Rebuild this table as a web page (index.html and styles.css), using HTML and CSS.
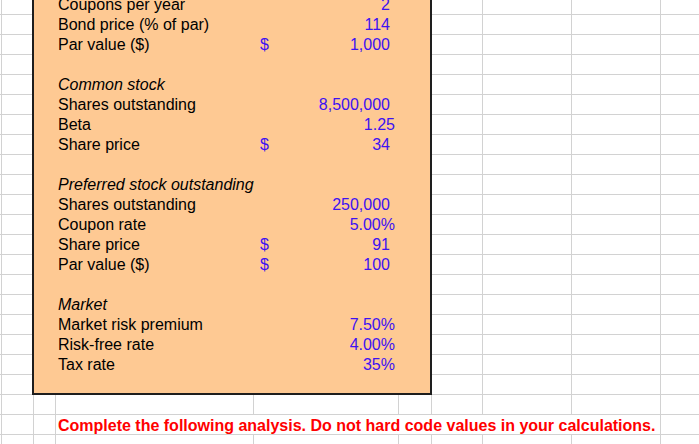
FILE: index.html
```html
<!DOCTYPE html>
<html lang="en">
<head>
<meta charset="utf-8">
<title>Inputs</title>
<link rel="stylesheet" href="styles.css">
</head>
<body>
<div class="sheet">
  <div class="inputs">
    <div class="row"><span class="lbl">Coupons per year</span><span class="val"><span class="num">2</span></span></div>
    <div class="row"><span class="lbl">Bond price (% of par)</span><span class="val"><span class="num">114</span></span></div>
    <div class="row"><span class="lbl">Par value ($)</span><span class="val"><span class="cur">$</span><span class="num">1,000</span></span></div>
    <div class="row"></div>
    <div class="row"><span class="lbl head">Common stock</span></div>
    <div class="row"><span class="lbl">Shares outstanding</span><span class="val"><span class="num">8,500,000</span></span></div>
    <div class="row"><span class="lbl">Beta</span><span class="val pct"><span class="num">1.25</span></span></div>
    <div class="row"><span class="lbl">Share price</span><span class="val"><span class="cur">$</span><span class="num">34</span></span></div>
    <div class="row"></div>
    <div class="row"><span class="lbl head">Preferred stock outstanding</span></div>
    <div class="row"><span class="lbl">Shares outstanding</span><span class="val"><span class="num">250,000</span></span></div>
    <div class="row"><span class="lbl">Coupon rate</span><span class="val pct"><span class="num">5.00%</span></span></div>
    <div class="row"><span class="lbl">Share price</span><span class="val"><span class="cur">$</span><span class="num">91</span></span></div>
    <div class="row"><span class="lbl">Par value ($)</span><span class="val"><span class="cur">$</span><span class="num">100</span></span></div>
    <div class="row"></div>
    <div class="row"><span class="lbl head">Market</span></div>
    <div class="row"><span class="lbl">Market risk premium</span><span class="val pct"><span class="num">7.50%</span></span></div>
    <div class="row"><span class="lbl">Risk-free rate</span><span class="val pct"><span class="num">4.00%</span></span></div>
    <div class="row"><span class="lbl">Tax rate</span><span class="val pct"><span class="num">35%</span></span></div>
    <div class="row"></div>
  </div>
  <div class="note">Complete the following analysis. Do not hard code values in your calculations.</div>
</div>
</body>
</html>
```

FILE: styles.css
```css
html, body {
  margin: 0;
  padding: 0;
  background: #fff;
  overflow: hidden;
}

body {
  font-family: "Liberation Sans", Arial, Helvetica, sans-serif;
  font-size: 16px;
  color: #000;
}

.sheet {
  display: grid;
  grid-template-columns: 34px 22px 198px 145px 33px 51px 89px 89px 89px;
  grid-template-rows: repeat(23, 20px);
  width: 750px;
  margin-top: -5px;
  background:
    linear-gradient(#d2d2d2, #d2d2d2) 1px 0 / 1px 100% no-repeat,
    linear-gradient(#d2d2d2, #d2d2d2) 33px 0 / 1px 100% no-repeat,
    linear-gradient(#d2d2d2, #d2d2d2) 55px 0 / 1px 100% no-repeat,
    linear-gradient(#d2d2d2, #d2d2d2) 253px 0 / 1px 100% no-repeat,
    linear-gradient(#d2d2d2, #d2d2d2) 398px 0 / 1px 100% no-repeat,
    linear-gradient(#d2d2d2, #d2d2d2) 431px 0 / 1px 100% no-repeat,
    linear-gradient(#d2d2d2, #d2d2d2) 482px 0 / 1px 100% no-repeat,
    linear-gradient(#d2d2d2, #d2d2d2) 571px 0 / 1px 100% no-repeat,
    linear-gradient(#d2d2d2, #d2d2d2) 660px 0 / 1px 100% no-repeat,
    linear-gradient(to bottom, transparent 19px, #d2d2d2 19px) 0 0 / 100% 20px repeat-y,
    #fff;
}

.inputs {
  grid-column: 2 / 6;
  grid-row: 1 / 21;
  margin: -2px 0 0 -2px;
  border: 2px solid #1e1e1e;
  background: #fec993;
  display: flex;
  flex-direction: column;
}

.row {
  display: flex;
  flex: none;
  height: 20px;
  line-height: 20px;
  padding-left: 22px;
  white-space: nowrap;
}

.lbl {
  width: 198px;
  box-sizing: border-box;
  padding-left: 2px;
}

.head {
  font-style: italic;
}

.val {
  width: 145px;
  box-sizing: border-box;
  display: flex;
  padding: 0 9px 0 6px;
  color: #3d12f2;
}

.val.pct {
  padding-right: 4px;
}

.num {
  margin-left: auto;
}

.note {
  grid-column: 3 / 9;
  grid-row: 22;
  margin: 0 1px 1px 0;
  padding: 1px 0 0 2px;
  background: #fff;
  line-height: 20px;
  font-weight: bold;
  color: #f00;
  white-space: nowrap;
}
```
